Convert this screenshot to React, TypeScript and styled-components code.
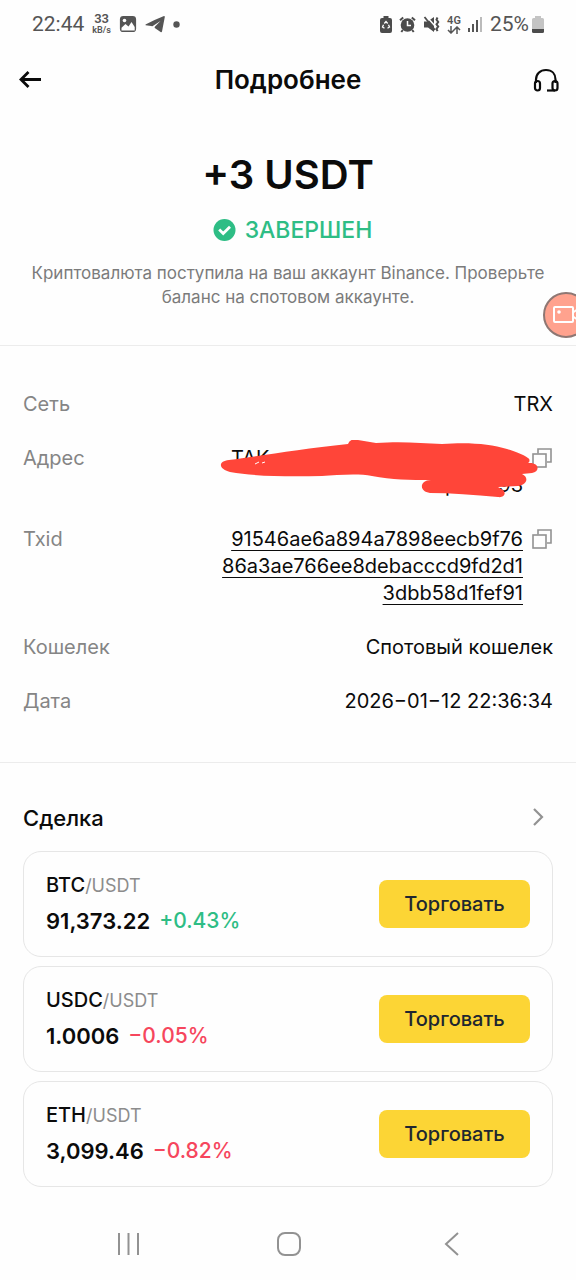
import React from "react";
import styled, { createGlobalStyle } from "styled-components";

const GlobalStyle = createGlobalStyle`
  * { box-sizing: border-box; }
  body { margin: 0; background: #fefefe; }
  button { font: inherit; border: 0; padding: 0; background: none; cursor: pointer; color: inherit; }
  h1, h2, p, dl, dd, dt, ul { margin: 0; padding: 0; }
  svg { display: block; flex: none; }
`;

const Page = styled.main`
  position: relative;
  overflow: hidden;
  min-height: 100vh;
  display: flex;
  flex-direction: column;
  background: #fefefe;
  color: #0b0b0b;
  font-family: Inter, "Noto Sans", sans-serif;
`;

const StatusBar = styled.div`
  display: flex;
  justify-content: space-between;
  align-items: center;
  height: 48px;
  padding: 0 32px;
  color: #555;
  font-family: Roboto, sans-serif;
`;

const StatusGroup = styled.div<{ $gap: number }>`
  display: flex;
  align-items: center;
  gap: ${(p) => p.$gap}px;
`;

const StatusText = styled.span`
  font-size: 21px;
  line-height: 24px;
`;

const StackedText = styled.span`
  display: flex;
  flex-direction: column;
  align-items: center;
  font-size: 13px;
  font-weight: 600;
  line-height: 12px;
`;

const StackedUnit = styled.span`
  font-size: 9px;
  line-height: 10px;
`;

const NetworkText = styled(StackedText)`
  font-size: 11px;
  line-height: 11px;
`;

const Header = styled.header`
  display: grid;
  grid-template-columns: 28px 1fr 28px;
  align-items: center;
  height: 64px;
  padding: 0 16px;
`;

const Title = styled.h1`
  text-align: center;
  font-size: 26px;
  line-height: 32px;
  font-weight: 600;
`;

const Summary = styled.section`
  display: flex;
  flex-direction: column;
  align-items: center;
  padding: 36px 23px;
  border-bottom: 1px solid #ececec;
`;

const Amount = styled.p`
  font-size: 40px;
  line-height: 54px;
  font-weight: 600;
`;

const State = styled.p`
  display: flex;
  align-items: center;
  gap: 9px;
  margin: 12px 0 15px;
  padding-left: 9px;
  color: #2ebd85;
  font-size: 23px;
  line-height: 32px;
  font-weight: 500;
`;

const Note = styled.p`
  max-width: 530px;
  text-align: center;
  color: #7b7b7b;
  font-size: 17px;
  line-height: 24px;
`;

const FloatingButton = styled.button`
  position: absolute;
  top: 292px;
  right: -13px;
  display: flex;
  align-items: center;
  justify-content: center;
  width: 46px;
  height: 46px;
  border: 2px solid #8e7773;
  border-radius: 50%;
  background: #ffa28e;
`;

const Details = styled.dl`
  display: flex;
  flex-direction: column;
  gap: 27px;
  padding: 45px 23px 47px;
  border-bottom: 1px solid #ececec;
`;

const Row = styled.div`
  display: flex;
  justify-content: space-between;
  font-size: 20px;
  line-height: 27px;
`;

const Label = styled.dt`
  color: #858585;
`;

const Value = styled.dd`
  position: relative;
  display: flex;
  align-items: flex-start;
  gap: 8px;
  text-align: right;
`;

const Address = styled.span`
  display: flex;
  flex-direction: column;
  width: 292px;
`;

const AddressLine = styled.span<{ $start: number; $end: number }>`
  display: flex;
  justify-content: space-between;
  padding: 0 ${(p) => p.$end}px 0 ${(p) => p.$start}px;
`;

const Redaction = styled.svg`
  position: absolute;
  top: -5px;
  right: 15px;
  pointer-events: none;
`;

const HashLink = styled.a`
  display: flex;
  flex-direction: column;
  align-items: flex-end;
  color: inherit;
  text-decoration: underline;
  text-decoration-thickness: 1px;
  text-underline-offset: 4px;
`;

const CopyButton = styled.button`
  display: flex;
  align-items: center;
  height: 27px;
`;

const Deals = styled.section`
  display: flex;
  flex-direction: column;
  gap: 17px;
  padding: 39px 23px 24px;
`;

const DealsHeader = styled.div`
  display: flex;
  justify-content: space-between;
  align-items: center;
  padding-right: 8px;
`;

const DealsTitle = styled.h2`
  font-size: 22px;
  line-height: 32px;
  font-weight: 500;
`;

const CardList = styled.ul`
  display: flex;
  flex-direction: column;
  gap: 9px;
  list-style: none;
`;

const Card = styled.li`
  display: flex;
  justify-content: space-between;
  align-items: center;
  height: 106px;
  padding: 0 22px;
  border: 1px solid #e6e6e6;
  border-radius: 18px;
`;

const Ticker = styled.div`
  padding-bottom: 4px;
`;

const Pair = styled.p`
  font-size: 20px;
  line-height: 36px;
  font-weight: 500;
`;

const Quote = styled.span`
  color: #8c8c8c;
  font-size: 18px;
  font-weight: 400;
`;

const Price = styled.p`
  display: flex;
  gap: 9px;
  font-size: 22px;
  line-height: 34px;
  font-weight: 600;
`;

const Change = styled.span<{ $up: boolean }>`
  color: ${(p) => (p.$up ? "#2ebd85" : "#f6465d")};
  font-size: 21px;
  font-weight: 500;
`;

const TradeButton = styled.button`
  width: 151px;
  height: 48px;
  border-radius: 8px;
  background: #fcd535;
  color: #202630;
  font-size: 20px;
  font-weight: 500;
`;

const NavBar = styled.nav`
  display: flex;
  justify-content: space-between;
  align-items: center;
  height: 66px;
  padding: 0 114px 0 115px;
`;

const ImageIcon = () => (
  <svg width="18" height="18" viewBox="0 0 18 18" fill="none">
    <rect x="1.800" y="1.800" width="14.400" height="14.400" rx="2.500" fill="#555" stroke="#555" strokeWidth="1.800" />
    <path d="M2.500 12.800 6.500 9l3 2.500L12.500 7l3.200 5v3.500H2.500Z" fill="#fefefe" />
    <circle cx="5.500" cy="5.500" r="1.800" fill="#fefefe" />
  </svg>
);

const TelegramIcon = () => (
  <svg width="20" height="18" viewBox="0 0 20 18">
    <path d="M.5 9.500Q10 4.500 19 1q1 0 .8 1L17 16.500q-.4 1-1.400.4l-5.800-4Q9.300 12 10 11.400L15.500 6 7.800 11q-.6.4-1.600.1L.6 10.200Z" fill="#555" />
  </svg>
);

const DotIcon = () => (
  <svg width="7" height="7" viewBox="0 0 7 7">
    <circle cx="3.500" cy="3.500" r="3.200" fill="#555" />
  </svg>
);

const BatterySaverIcon = () => (
  <svg width="12" height="17" viewBox="0 0 12 17">
    <path d="M3.500 0h5v2H10a2 2 0 0 1 2 2v11a2 2 0 0 1-2 2H2a2 2 0 0 1-2-2V4a2 2 0 0 1 2-2h1.500Z" fill="#4c4c4c" />
    <path d="m4.300 7.500 1.700-2 1.700 2M8.500 8.800l1 2.200-2 1.200M3.500 8.800l-1 2.200 2 1.200" fill="none" stroke="#fefefe" strokeWidth="1.300" />
  </svg>
);

const AlarmIcon = () => (
  <svg width="17" height="17" viewBox="0 0 17 17" fill="none" stroke="#4c4c4c">
    <circle cx="8.500" cy="9" r="6.800" fill="#4c4c4c" stroke="none" />
    <path d="m1 4.200 3.200-2.700M16 4.200l-3.200-2.700M3.800 14l-1.500 2M13.200 14l1.500 2" strokeWidth="2" />
    <path d="M8.500 5v4.500H12" stroke="#fefefe" strokeWidth="1.500" />
  </svg>
);

const MuteIcon = () => (
  <svg width="17" height="17" viewBox="0 0 17 17" fill="none" stroke="#4c4c4c">
    <path d="M1 5.500h3.500L11 1v15l-6-4.500H1Z" fill="#4c4c4c" stroke="none" />
    <path d="M3.500 .5 12.500 10.500" stroke="#fefefe" strokeWidth="1.500" />
    <path d="M1.500 1 12 14" strokeWidth="1.800" />
    <path d="m14.500 1.500-1 2.200 1.700 2.300-1.700 2.300 1.700 2.300-1.700 2.300 1 2.200" strokeWidth="2" />
  </svg>
);

const ArrowsIcon = () => (
  <svg width="14" height="8" viewBox="0 0 14 8" fill="none" stroke="#555" strokeWidth="1.500">
    <path d="M4 0v7M1 4l3 3 3-3M10 8V1M7 4l3-3 3 3" />
  </svg>
);

const SignalIcon = () => (
  <svg width="15" height="16" viewBox="0 0 15 16" fill="#555">
    <rect x="0" y="12" width="2" height="4" />
    <rect x="4" y="8" width="2" height="8" />
    <rect x="8" y="4" width="2" height="12" />
    <rect x="12" y="1" width="2" height="15" fill="#bbb" />
  </svg>
);

const BatteryIcon = () => (
  <svg width="12" height="17" viewBox="0 0 12 17">
    <path d="M3 0h6v2h1.500A1.500 1.500 0 0 1 12 3.500V13H0V3.500A1.500 1.500 0 0 1 1.500 2H3Z" fill="#c4c4c4" />
    <path d="M0 13h12v2.500A1.500 1.500 0 0 1 10.500 17h-9A1.500 1.500 0 0 1 0 15.500Z" fill="#4c4c4c" />
  </svg>
);

const BackIcon = () => (
  <svg width="28" height="28" viewBox="0 0 28 28" fill="none" stroke="#0b0b0b" strokeWidth="2.800">
    <path d="M25 13.500H5M12.500 6l-7.500 7.500 7.500 7.500" />
  </svg>
);

const HeadsetIcon = () => (
  <svg width="28" height="28" viewBox="0 0 28 28" fill="none" stroke="#0b0b0b" strokeWidth="2.200">
    <path d="M4 17v-3.500C4 8 8 4 14 4s9.500 4 9.500 9.500V17" />
    <rect x="3" y="15" width="5" height="9.500" rx="2.500" />
    <rect x="20.500" y="15" width="5" height="9.500" rx="2.500" />
    <path d="M23 24.500h-8" />
  </svg>
);

const CheckIcon = () => (
  <svg width="23" height="23" viewBox="0 0 23 23" fill="none">
    <circle cx="11.500" cy="11" r="11" fill="#2ebd85" />
    <path d="m6.200 10.500 4 4 6.800-6.800" stroke="#fefefe" strokeWidth="2.800" />
  </svg>
);

const CameraIcon = () => (
  <svg width="28" height="20" viewBox="0 0 28 20" fill="none" stroke="#fff" strokeWidth="2">
    <rect x="2" y="2" width="19" height="15" rx="1" />
    <path d="M21 7.500 26 4v11l-5-3.500" />
    <circle cx="7" cy="7" r="1.800" fill="#fff" stroke="none" />
  </svg>
);

const CopyIcon = () => (
  <svg width="22" height="22" viewBox="0 0 22 22" fill="none" stroke="#929292" strokeWidth="1.600">
    <path d="M7 5.500V1h13v13h-4" />
    <rect x="2" y="6" width="13" height="13" />
  </svg>
);

const ChevronIcon = () => (
  <svg width="14" height="20" viewBox="0 0 14 20" fill="none" stroke="#929292" strokeWidth="2.200">
    <path d="m3 1 8 8-8 8" />
  </svg>
);

const RecentsIcon = () => (
  <svg width="26" height="26" viewBox="0 0 26 26" stroke="#929292" strokeWidth="2">
    <path d="M4 2v22M13.500 2v22M23 2v22" />
  </svg>
);

const HomeIcon = () => (
  <svg width="26" height="26" viewBox="0 0 26 26" fill="none" stroke="#929292" strokeWidth="2">
    <rect x="2" y="2" width="22" height="22" rx="7" />
  </svg>
);

const NavBackIcon = () => (
  <svg width="26" height="26" viewBox="0 0 26 26" fill="none" stroke="#929292" strokeWidth="2">
    <path d="M22 2 10 13l12 11" />
  </svg>
);

const hashLines = ["91546ae6a894a7898eecb9f76", "86a3ae766ee8debacccd9fd2d1", "3dbb58d1fef91"];

const pairs = [
  { base: "BTC", price: "91,373.22", change: "+0.43%", up: true },
  { base: "USDC", price: "1.0006", change: "−0.05%", up: false },
  { base: "ETH", price: "3,099.46", change: "−0.82%", up: false },
];

export default function App() {
  return (
    <Page>
      <GlobalStyle />
      <StatusBar>
        <StatusGroup $gap={8}>
          <StatusText>22:44</StatusText>
          <StackedText>
            33<StackedUnit>kB/s</StackedUnit>
          </StackedText>
          <ImageIcon />
          <TelegramIcon />
          <DotIcon />
        </StatusGroup>
        <StatusGroup $gap={7}>
          <BatterySaverIcon />
          <AlarmIcon />
          <MuteIcon />
          <NetworkText>
            4G
            <ArrowsIcon />
          </NetworkText>
          <SignalIcon />
          <StatusGroup $gap={3}>
            <StatusText>25%</StatusText>
            <BatteryIcon />
          </StatusGroup>
        </StatusGroup>
      </StatusBar>

      <Header>
        <button aria-label="Назад"><BackIcon /></button>
        <Title>Подробнее</Title>
        <button aria-label="Поддержка"><HeadsetIcon /></button>
      </Header>

      <Summary>
        <Amount>+3 USDT</Amount>
        <State><CheckIcon />ЗАВЕРШЕН</State>
        <Note>Криптовалюта поступила на ваш аккаунт Binance. Проверьте баланс на спотовом аккаунте.</Note>
      </Summary>
      <FloatingButton aria-label="Запись экрана"><CameraIcon /></FloatingButton>

      <Details>
        <Row>
          <Label>Сеть</Label>
          <Value>TRX</Value>
        </Row>
        <Row>
          <Label>Адрес</Label>
          <Value>
            <Address>
              <AddressLine $start={0} $end={12}><span>TAK</span><span>7</span></AddressLine>
              <AddressLine $start={214} $end={0}><span>p</span><span>193</span></AddressLine>
            </Address>
            <CopyButton aria-label="Копировать адрес"><CopyIcon /></CopyButton>
            <Redaction width="318" height="60" viewBox="0 0 318 60" fill="#ff4539">
              <path d="M9 20C40 16 80 9 128 4q2-6 10-4l18 3c25-2 45 0 66 1 28-2 48 0 65 5 9 3 15 5 21 9 2 1 2 4 0 5 12-1 12 9 4 10l-10 1c8 4 4 11-4 12l-20 1 5 3c4 4 0 8-5 7-24-2-47-4-68-4-11-1-11-13 1-13C190 40 172 40 152 36c-14-3-35-1-50 0-38 1-68 0-92-4-12-3-12-11-1-12Z" />
              <path d="m35 24 4-2m3 1 3-1" stroke="#fff" />
            </Redaction>
          </Value>
        </Row>
        <Row>
          <Label>Txid</Label>
          <Value>
            <HashLink href="#txid">
              {hashLines.map((line) => <span key={line}>{line}</span>)}
            </HashLink>
            <CopyButton aria-label="Копировать Txid"><CopyIcon /></CopyButton>
          </Value>
        </Row>
        <Row>
          <Label>Кошелек</Label>
          <Value>Спотовый кошелек</Value>
        </Row>
        <Row>
          <Label>Дата</Label>
          <Value>2026−01−12 22:36:34</Value>
        </Row>
      </Details>

      <Deals>
        <DealsHeader>
          <DealsTitle>Сделка</DealsTitle>
          <button aria-label="Все пары"><ChevronIcon /></button>
        </DealsHeader>
        <CardList>
          {pairs.map((pair) => (
            <Card key={pair.base}>
              <Ticker>
                <Pair>{pair.base}<Quote>/USDT</Quote></Pair>
                <Price>{pair.price}<Change $up={pair.up}>{pair.change}</Change></Price>
              </Ticker>
              <TradeButton>Торговать</TradeButton>
            </Card>
          ))}
        </CardList>
      </Deals>

      <NavBar>
        <button aria-label="Недавние"><RecentsIcon /></button>
        <button aria-label="Домой"><HomeIcon /></button>
        <button aria-label="Назад в системе"><NavBackIcon /></button>
      </NavBar>
    </Page>
  );
}
